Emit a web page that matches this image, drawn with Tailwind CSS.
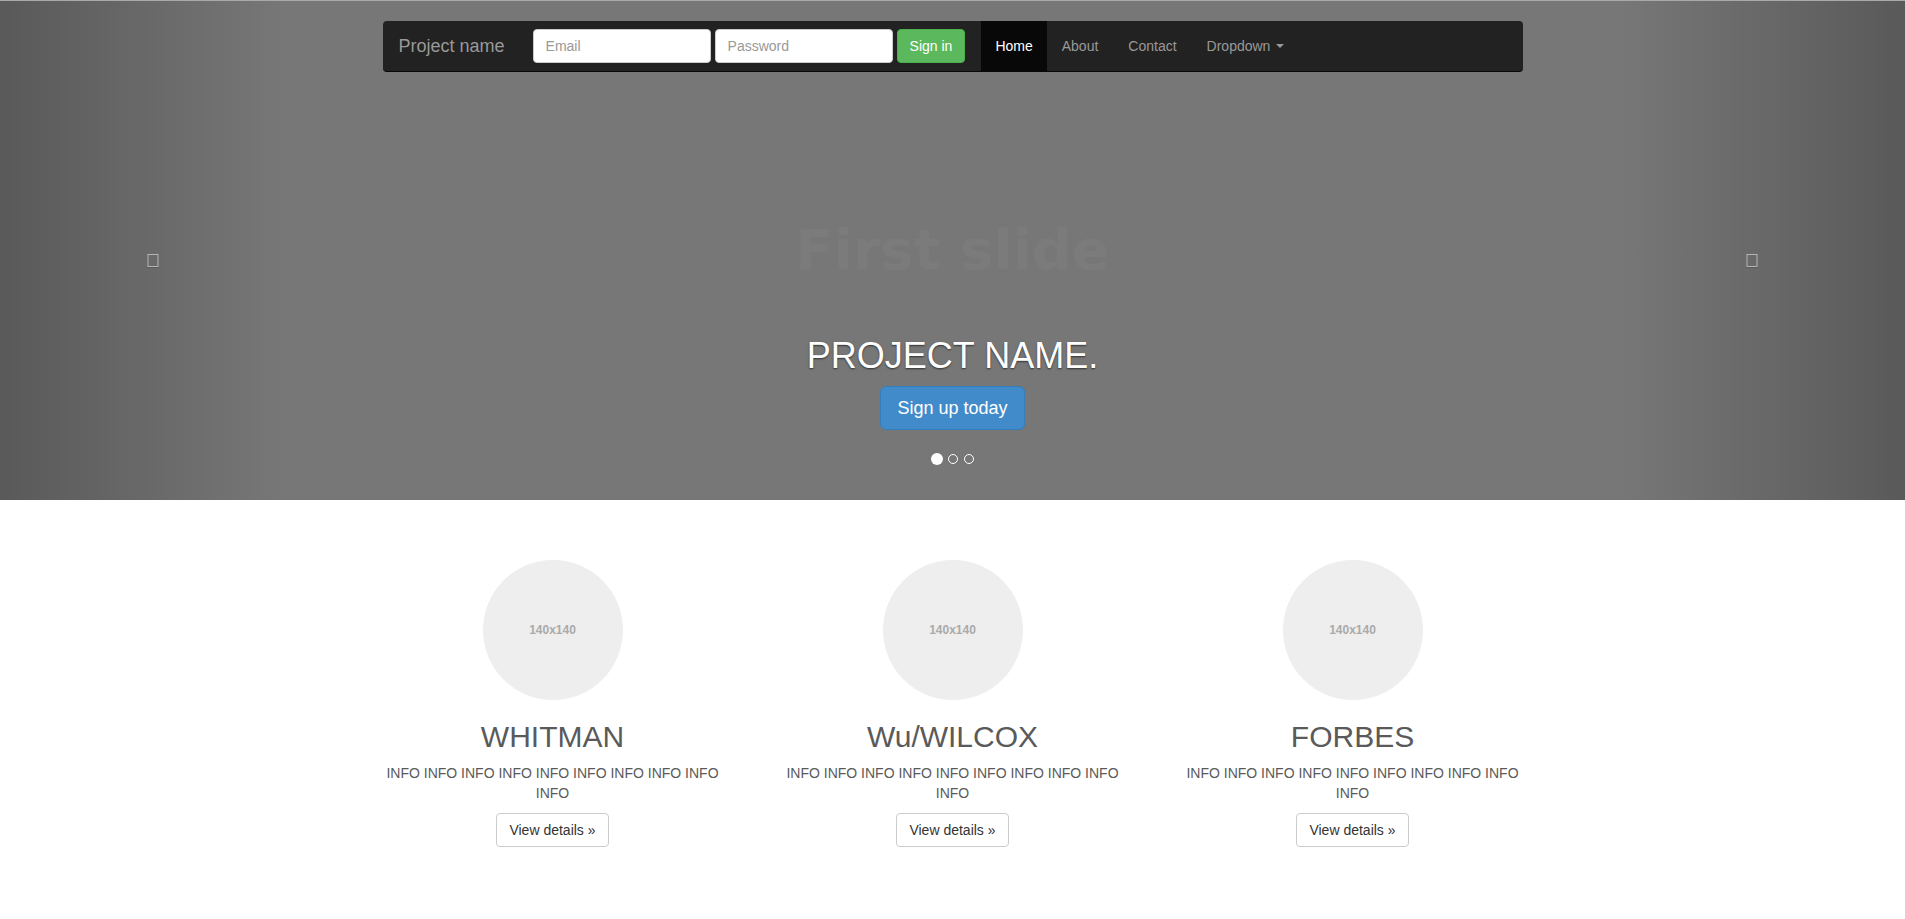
<!DOCTYPE html>
<html lang="en">
<head>
<meta charset="utf-8">
<meta name="viewport" content="width=device-width, initial-scale=1">
<title>Project name</title>
<script src="https://cdn.jsdelivr.net/npm/@tailwindcss/browser@4"></script>
</head>
<body class="bg-white font-['Liberation_Sans',Arial,sans-serif] text-sm leading-5 text-[#5a5a5a]">

<header class="relative flex flex-col items-center border-t border-[#a9a9a9] bg-[#777] px-4 pt-5 pb-[35px]">
  <button type="button" aria-label="Previous slide" class="absolute inset-y-0 left-0 flex w-[15%] items-center justify-center bg-linear-to-r from-black/25 to-transparent pl-5 pt-5">
    <svg class="h-4 w-3" viewBox="0 0 12 16" fill="none" shape-rendering="crispEdges"><path d="M0 14h12v1H0z" fill="#000" opacity=".15"/><path d="M0 1h2v13H0zM10 1h2v13h-2z" fill="#8e8e8e"/><path d="M1 1h10v1H1zM1 13h10v1H1z" fill="#b5b5b5"/></svg>
  </button>
  <button type="button" aria-label="Next slide" class="absolute inset-y-0 right-0 flex w-[15%] items-center justify-center bg-linear-to-l from-black/25 to-transparent pr-5 pt-5">
    <svg class="h-4 w-3" viewBox="0 0 12 16" fill="none" shape-rendering="crispEdges"><path d="M0 14h12v1H0z" fill="#000" opacity=".15"/><path d="M0 1h2v13H0zM10 1h2v13h-2z" fill="#8e8e8e"/><path d="M1 1h10v1H1zM1 13h10v1H1z" fill="#b5b5b5"/></svg>
  </button>

  <nav class="relative flex w-full max-w-[1140px] flex-wrap items-center rounded border-b border-[#080808] bg-[#222] text-[#999]">
    <a href="#" class="py-[15px] pr-3 pl-4 text-lg leading-5">Project name</a>
    <form class="flex gap-1 px-4">
      <input type="email" aria-label="Email" placeholder="Email" class="h-[34px] w-[178px] rounded border border-[#ccc] bg-white px-3 text-[#555] placeholder:text-[#999]">
      <input type="password" aria-label="Password" placeholder="Password" class="h-[34px] w-[178px] rounded border border-[#ccc] bg-white px-3 text-[#555] placeholder:text-[#999]">
      <button type="submit" class="h-[34px] rounded border border-[#4cae4c] bg-[#5cb85c] px-3 text-white">Sign in</button>
    </form>
    <ul class="flex">
      <li><a href="#" class="block bg-[#080808] px-3.5 py-[15px] text-white">Home</a></li>
      <li><a href="#about" class="block p-[15px]">About</a></li>
      <li><a href="#contact" class="block p-[15px]">Contact</a></li>
      <li><button type="button" aria-haspopup="true" class="flex items-center gap-1.5 p-[15px]">Dropdown <span class="border-x-4 border-t-4 border-x-transparent border-t-[#999]"></span></button></li>
    </ul>
  </nav>

  <p class="mt-[150px] font-['DejaVu_Sans',sans-serif] text-[56px] leading-14 font-bold text-[#7b7b7b]">First slide</p>
  <h1 class="mt-[58px] text-4xl leading-10 text-white text-shadow-[0_1px_2px_rgba(0,0,0,0.6)]">PROJECT NAME.</h1>
  <a href="#" class="relative mt-2.5 rounded-md border border-[#357ebd] bg-[#428bca] px-4 py-2.5 text-lg leading-[22px] text-white">Sign up today</a>
  <div class="mt-[23px] flex items-center gap-[5px]">
    <button type="button" aria-label="Slide 1" class="size-3 rounded-full bg-white"></button>
    <button type="button" aria-label="Slide 2" class="size-2.5 rounded-full border border-white"></button>
    <button type="button" aria-label="Slide 3" class="ml-px size-2.5 rounded-full border border-white"></button>
  </div>
</header>

<main class="mx-auto grid max-w-[1200px] grid-cols-3 pt-[60px] pb-10 text-center">
  <section class="flex flex-col items-center px-[25px]">
    <div class="flex size-[140px] items-center justify-center rounded-full bg-[#eee] text-xs font-bold text-[#aaa]">140x140</div>
    <h2 class="mt-5 text-3xl leading-[33px]">WHITMAN</h2>
    <p class="mt-2.5">INFO INFO INFO INFO INFO INFO INFO INFO INFO INFO</p>
    <a href="#" class="mt-2.5 rounded border border-[#ccc] bg-white px-3 py-1.5 text-[#333]">View details »</a>
  </section>
  <section class="flex flex-col items-center px-[25px]">
    <div class="flex size-[140px] items-center justify-center rounded-full bg-[#eee] text-xs font-bold text-[#aaa]">140x140</div>
    <h2 class="mt-5 text-3xl leading-[33px]">Wu/WILCOX</h2>
    <p class="mt-2.5">INFO INFO INFO INFO INFO INFO INFO INFO INFO INFO</p>
    <a href="#" class="mt-2.5 rounded border border-[#ccc] bg-white px-3 py-1.5 text-[#333]">View details »</a>
  </section>
  <section class="flex flex-col items-center px-[25px]">
    <div class="flex size-[140px] items-center justify-center rounded-full bg-[#eee] text-xs font-bold text-[#aaa]">140x140</div>
    <h2 class="mt-5 text-3xl leading-[33px]">FORBES</h2>
    <p class="mt-2.5">INFO INFO INFO INFO INFO INFO INFO INFO INFO INFO</p>
    <a href="#" class="mt-2.5 rounded border border-[#ccc] bg-white px-3 py-1.5 text-[#333]">View details »</a>
  </section>
</main>
</body>
</html>
